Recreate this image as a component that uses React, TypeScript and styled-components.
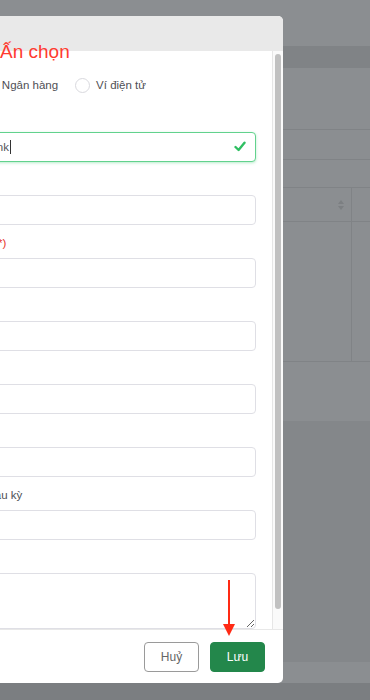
import React from "react";
import styled, { createGlobalStyle } from "styled-components";

const Global = createGlobalStyle`
  html, body { margin: 0; padding: 0; }
  body { font-family: "Liberation Sans", Arial, sans-serif; background: #8b8e91; }
  * { box-sizing: border-box; }
`;

const Screen = styled.div`
  position: relative;
  width: 370px;
  height: 700px;
  overflow: hidden;
  background: #8b8e91;
`;

/* ---------- backdrop page (already dimmed) ---------- */
const Backdrop = styled.div`
  display: flex;
  flex-direction: column;
  height: 100%;
`;
const Band = styled.div<{ $h: number; $bg: string; $line?: boolean }>`
  height: ${(p) => p.$h}px;
  flex: none;
  background: ${(p) => p.$bg};
  border-bottom: ${(p) => (p.$line ? "1px solid #808386" : "none")};
`;
const TableRow = styled.div<{ $h: number }>`
  height: ${(p) => p.$h}px;
  flex: none;
  display: grid;
  grid-template-columns: 352px 1fr;
  border-bottom: 1px solid #808386;
`;
const Cell = styled.div<{ $divider?: boolean }>`
  display: flex;
  align-items: center;
  justify-content: flex-end;
  padding-right: 6px;
  border-right: ${(p) => (p.$divider ? "1px solid #808386" : "none")};
`;
const Fill = styled.div<{ $bg: string }>`
  flex: 1;
  background: ${(p) => p.$bg};
`;

/* ---------- modal ---------- */
const Modal = styled.div`
  position: absolute;
  left: -89px;
  top: 16px;
  width: 372px;
  height: 667px;
  background: #fff;
  border-radius: 5px;
  display: flex;
  flex-direction: column;
  overflow: hidden;
`;
const Header = styled.div`
  height: 35px;
  flex: none;
  background: #e9e9e9;
`;
const Body = styled.div`
  flex: 1;
  display: flex;
  min-height: 0;
`;
const Content = styled.div`
  flex: 1;
  overflow: hidden;
  padding: 26px 16px 0 16px;
  display: flex;
  flex-direction: column;
`;
const ScrollTrack = styled.div`
  width: 11px;
  flex: none;
  border-left: 1px solid #e6e6e6;
  background: #fafafa;
  padding: 3px 2px 20px 2px;
  display: flex;
`;
const ScrollThumb = styled.div`
  flex: 1;
  background: #c1c1c1;
  border-radius: 3px;
`;

const RadioRow = styled.div`
  display: flex;
  align-items: center;
  gap: 17px;
  height: 16px;
  margin: 0 0 16px -4px;
`;
const RadioOption = styled.label`
  display: flex;
  align-items: center;
  gap: 6px;
  font-size: 11.5px;
  color: #4f4f55;
`;
const RadioDot = styled.span<{ $checked?: boolean }>`
  width: 15px;
  height: 15px;
  border-radius: 50%;
  border: 1px solid ${(p) => (p.$checked ? "#23874b" : "#d9d9de")};
  background: #fff;
  display: flex;
  align-items: center;
  justify-content: center;
  &::after {
    content: "";
    width: 7px;
    height: 7px;
    border-radius: 50%;
    background: ${(p) => (p.$checked ? "#23874b" : "transparent")};
  }
`;

const Fields = styled.div`
  display: flex;
  flex-direction: column;
  gap: 10px;
`;
const Field = styled.div`
  display: flex;
  flex-direction: column;
`;
const Label = styled.div`
  font-size: 11.5px;
  line-height: 16px;
  color: #4f4f55;
  margin-bottom: 7px;
  white-space: nowrap;
`;
const Req = styled.span`
  color: #e8332a;
`;
const InputWrap = styled.div`
  position: relative;
`;
const Input = styled.input<{ $valid?: boolean }>`
  width: 100%;
  height: 30px;
  border: 1px solid ${(p) => (p.$valid ? "#62d28d" : "#dfdfe5")};
  border-radius: 4px;
  padding: 0 10px;
  font-family: "Liberation Sans", Arial, sans-serif;
  font-size: 11.5px;
  color: #55555b;
  background: #fff;
  outline: none;
  box-shadow: ${(p) => (p.$valid ? "0 1px 3px rgba(98, 210, 141, 0.45)" : "none")};
`;
const Caret = styled.span<{ $left: number }>`
  position: absolute;
  left: ${(p) => p.$left}px;
  top: 8px;
  width: 1px;
  height: 14px;
  background: #333;
`;
const Check = styled.svg`
  position: absolute;
  right: 10px;
  top: 9px;
`;
const TextArea = styled.textarea`
  width: 100%;
  height: 56px;
  border: 1px solid #dfdfe5;
  border-radius: 4px;
  padding: 6px 10px;
  font-family: "Liberation Sans", Arial, sans-serif;
  font-size: 11.5px;
  resize: vertical;
  outline: none;
  display: block;
`;

const Footer = styled.div`
  height: 54px;
  flex: none;
  border-top: 1px solid #e8e8e8;
  display: flex;
  justify-content: flex-end;
  align-items: flex-start;
  gap: 11px;
  padding: 12px 18px 0 0;
`;
const Button = styled.button<{ $primary?: boolean }>`
  width: 55px;
  height: 30px;
  border-radius: 4px;
  font-family: "Liberation Sans", Arial, sans-serif;
  font-size: 12px;
  cursor: pointer;
  border: 1px solid ${(p) => (p.$primary ? "#23874b" : "#9a9a9a")};
  background: ${(p) => (p.$primary ? "#23874b" : "#fff")};
  color: ${(p) => (p.$primary ? "#fff" : "#666")};
`;

/* ---------- annotations ---------- */
const Note = styled.div`
  position: absolute;
  left: 0;
  top: 41px;
  font-size: 19px;
  line-height: 22px;
  color: #ff3b30;
  white-space: nowrap;
`;
const Arrow = styled.svg`
  position: absolute;
  left: 222px;
  top: 578px;
`;

const fields = [
  { label: "Chủ tài khoản" },
  { label: "Số tài khoản", req: true },
  { label: "Chi nhánh" },
  { label: "Địa chỉ" },
  { label: "Mã SWIFT" },
  { label: "Số tiền mặt đầu kỳ" },
];

export default function App() {
  return (
    <>
      <Global />
      <Screen>
        <Backdrop>
          <Band $h={46} $bg="#8b8e91" />
          <Band $h={22} $bg="#808386" />
          <Band $h={62} $bg="#8b8e91" $line />
          <Band $h={30} $bg="#8b8e91" $line />
          <Band $h={28} $bg="#8b8e91" $line />
          <TableRow $h={34}>
            <Cell $divider>
              <svg width="8" height="12" viewBox="0 0 8 12">
                <path d="M4 1 L7 5 H1 Z" fill="#7c7f82" />
                <path d="M4 11 L7 7 H1 Z" fill="#7c7f82" />
              </svg>
            </Cell>
            <Cell />
          </TableRow>
          <TableRow $h={140}>
            <Cell $divider />
            <Cell />
          </TableRow>
          <Band $h={59} $bg="#8b8e91" />
          <Band $h={241} $bg="#84878a" />
          <Band $h={21} $bg="#8b8e91" />
          <Fill $bg="#7b7e81" />
        </Backdrop>

        <Modal>
          <Header />
          <Body>
            <Content>
              <RadioRow>
                <RadioOption>
                  <RadioDot />
                  Thẻ
                </RadioOption>
                <RadioOption>
                  <RadioDot $checked />
                  Ngân hàng
                </RadioOption>
                <RadioOption>
                  <RadioDot />
                  Ví điện tử
                </RadioOption>
              </RadioRow>
              <Fields>
                <Field>
                  <Label>
                    Ngân hàng <Req>(*)</Req>
                  </Label>
                  <InputWrap>
                    <Input $valid readOnly value="Techcombank" />
                    <Caret $left={83} />
                    <Check width="12" height="11" viewBox="0 0 12 11">
                      <path d="M1.5 6 L4.6 9 L10.5 1.8" fill="none" stroke="#2fbf62" strokeWidth="2.4" strokeLinecap="round" strokeLinejoin="round" />
                    </Check>
                  </InputWrap>
                </Field>
                {fields.map((f) => (
                  <Field key={f.label}>
                    <Label>
                      {f.label}
                      {f.req && <Req> (*)</Req>}
                    </Label>
                    <Input readOnly value="" />
                  </Field>
                ))}
                <Field>
                  <Label>Ghi chú</Label>
                  <TextArea readOnly value="" />
                </Field>
              </Fields>
            </Content>
            <ScrollTrack>
              <ScrollThumb />
            </ScrollTrack>
          </Body>
          <Footer>
            <Button>Huỷ</Button>
            <Button $primary>Lưu</Button>
          </Footer>
        </Modal>

        <Note>Ấn chọn</Note>
        <Arrow width="14" height="60" viewBox="0 0 14 60">
          <line x1="7" y1="2" x2="7" y2="48" stroke="#ff2a14" strokeWidth="2" />
          <path d="M1 46 L13 46 L7 58 Z" fill="#ff2a14" />
        </Arrow>
      </Screen>
    </>
  );
}
